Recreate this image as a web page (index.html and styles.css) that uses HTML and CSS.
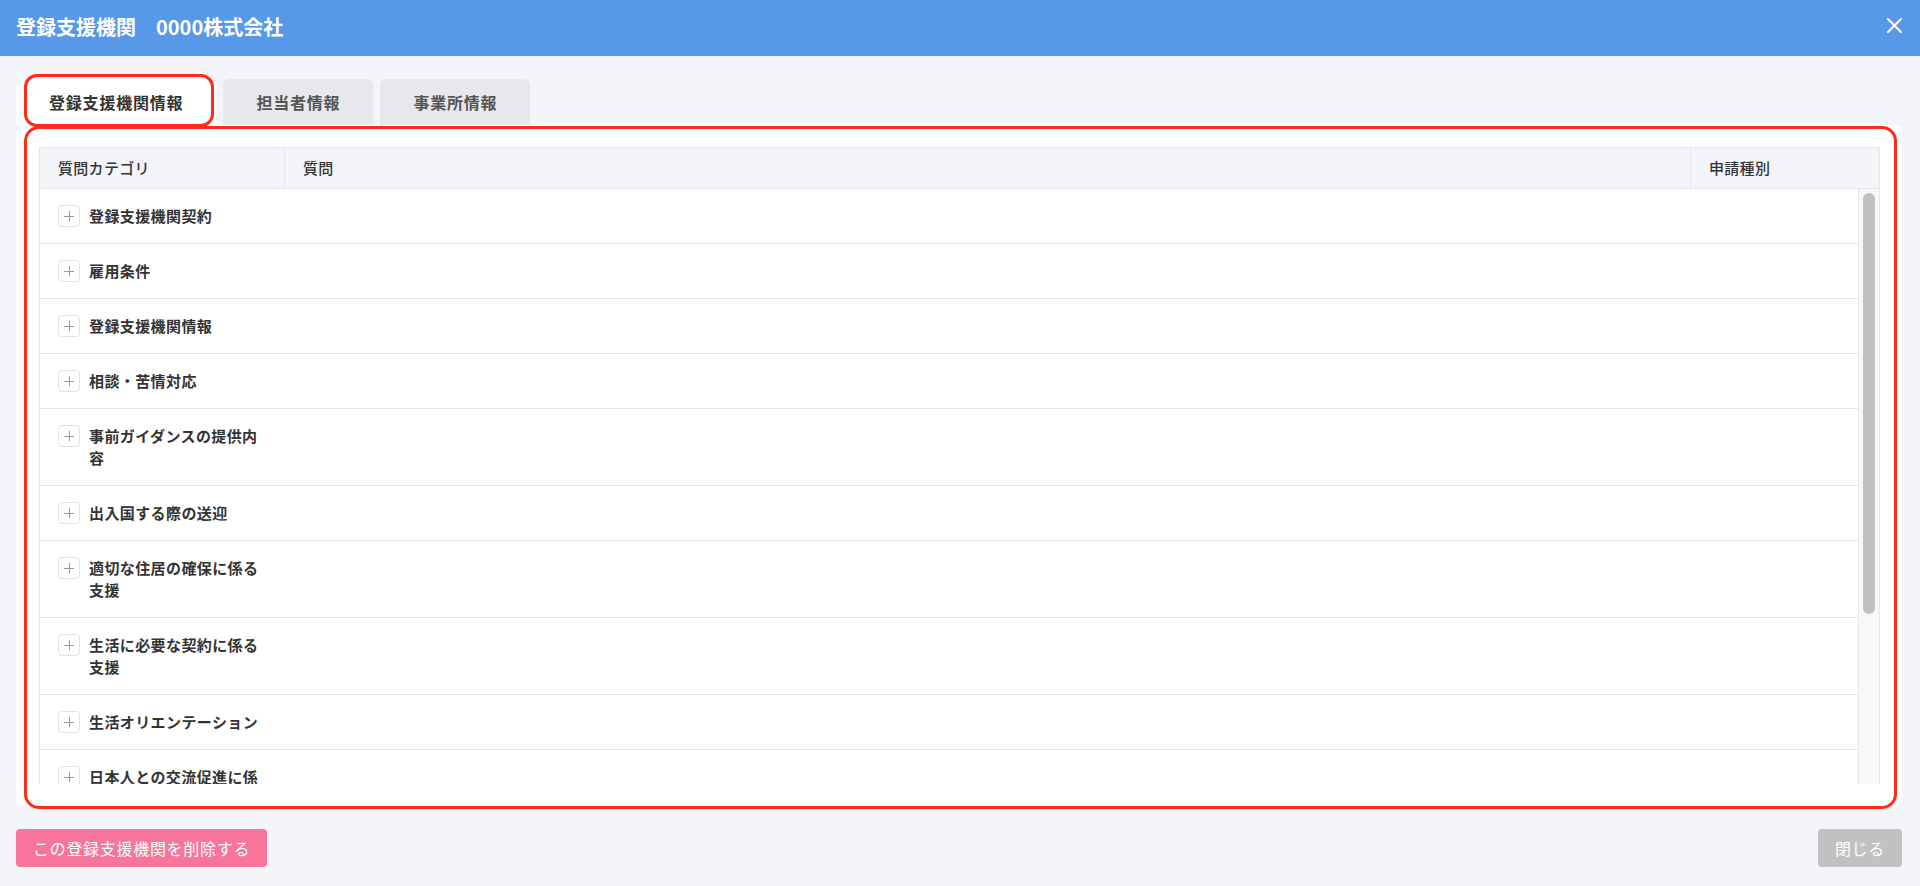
FILE: index.html
```html
<!DOCTYPE html>
<html lang="ja">
<head>
<meta charset="utf-8">
<title>登録支援機関</title>
<link rel="stylesheet" href="styles.css">
</head>
<body>
<div class="page">
  <header class="header">
    <div class="title">登録支援機関　0000株式会社</div>
    <button class="close-x" aria-label="close">
      <svg width="15" height="15" viewBox="0 0 15 15"><path d="M1 1L14 14M14 1L1 14" stroke="#fff" stroke-width="2" stroke-linecap="round"/></svg>
    </button>
  </header>

  <main class="main">
    <div class="tabs">
      <div class="tab active">登録支援機関情報</div>
      <div class="tab">担当者情報</div>
      <div class="tab">事業所情報</div>
    </div>
    <section class="card">
      <div class="table">
        <div class="thead">
          <div class="th">質問カテゴリ</div>
          <div class="th sep">質問</div>
          <div class="th sep">申請種別</div>
        </div>
        <div class="tbody">
          <div class="rows">
            <div class="row"><div class="cat"><span class="plus"></span><span class="cat-text">登録支援機関契約</span></div><div></div><div></div></div>
            <div class="row"><div class="cat"><span class="plus"></span><span class="cat-text">雇用条件</span></div><div></div><div></div></div>
            <div class="row"><div class="cat"><span class="plus"></span><span class="cat-text">登録支援機関情報</span></div><div></div><div></div></div>
            <div class="row"><div class="cat"><span class="plus"></span><span class="cat-text">相談・苦情対応</span></div><div></div><div></div></div>
            <div class="row"><div class="cat"><span class="plus"></span><span class="cat-text">事前ガイダンスの提供内容</span></div><div></div><div></div></div>
            <div class="row"><div class="cat"><span class="plus"></span><span class="cat-text">出入国する際の送迎</span></div><div></div><div></div></div>
            <div class="row"><div class="cat"><span class="plus"></span><span class="cat-text">適切な住居の確保に係る支援</span></div><div></div><div></div></div>
            <div class="row"><div class="cat"><span class="plus"></span><span class="cat-text">生活に必要な契約に係る支援</span></div><div></div><div></div></div>
            <div class="row"><div class="cat"><span class="plus"></span><span class="cat-text">生活オリエンテーション</span></div><div></div><div></div></div>
            <div class="row"><div class="cat"><span class="plus"></span><span class="cat-text">日本人との交流促進に係る支援</span></div><div></div><div></div></div>
          </div>
          <div class="vscroll"><div class="thumb"></div></div>
        </div>
      </div>
    </section>
  </main>

  <footer class="footer">
    <button class="btn btn-delete">この登録支援機関を削除する</button>
    <button class="btn btn-close">閉じる</button>
  </footer>

  <div class="anno anno-tab"></div>
  <div class="anno anno-card"></div>
</div>
</body>
</html>
```

FILE: styles.css
```css
* { box-sizing: border-box; }

html, body {
  margin: 0;
  padding: 0;
}

body {
  font-family: "Noto Sans CJK JP", "Noto Sans", sans-serif;
  background: #f4f5f9;
  color: #333;
  width: 1920px;
  height: 886px;
  overflow: hidden;
}

.page {
  position: relative;
  height: 886px;
}

.header {
  height: 56px;
  background: #5898e8;
  display: flex;
  align-items: center;
  justify-content: space-between;
  padding: 0 18px 0 16px;
}

.title {
  color: #fff;
  font-size: 20px;
  font-weight: 700;
  line-height: 1;
  padding-bottom: 2px;
}

.close-x {
  background: none;
  border: none;
  padding: 0;
  width: 15px;
  height: 15px;
  display: flex;
  margin-top: -6px;
}

.main {
  padding: 23px 18px 0 16px;
}

.tabs {
  display: flex;
  gap: 7px;
  height: 46px;
}

.tab {
  height: 46px;
  line-height: 46px;
  padding: 0 33px;
  font-size: 16px;
  letter-spacing: 0.8px;
  font-weight: 700;
  color: #555;
  background: #e7e8ec;
  border-radius: 6px 6px 0 0;
}

.tab.active {
  background: #fff;
  color: #333;
}

.card {
  background: #fff;
  border-radius: 0 6px 6px 6px;
  padding: 22px 22px 22px 23px;
}

.table {
  border: 1px solid #e6e6eb;
  border-bottom: none;
}

.thead {
  display: grid;
  grid-template-columns: 244px 1fr 189px;
  height: 41px;
  background: #f4f5f9;
  border-bottom: 1px solid #e6e6eb;
}

.th {
  font-size: 15px;
  line-height: 40px;
  padding-left: 18px;
  color: #333;
  font-weight: 500;
  letter-spacing: 0.3px;
}

.th.sep {
  border-left: 1px solid #e6e6eb;
}

.tbody {
  height: 595px;
  display: flex;
}

.rows {
  flex: 1;
  overflow: hidden;
}

.vscroll {
  flex: none;
  width: 21px;
  background: #f8f8fa;
  border-left: 1px solid #e6e6eb;
  padding: 4px 4px 0 4px;
}

.thumb {
  height: 421px;
  background: #c1c1c1;
  border-radius: 6px;
}

.row {
  display: grid;
  grid-template-columns: 244px 1fr 168px;
  border-bottom: 1px solid #e8e8ec;
}

.cat {
  display: flex;
  align-items: flex-start;
  gap: 9px;
  padding: 16px 16px 16px 18px;
}

.plus {
  flex: none;
  position: relative;
  width: 22px;
  height: 22px;
  border: 1px solid #e3e1e5;
  border-radius: 4px;
  background: #fff;
}

.plus::before,
.plus::after {
  content: "";
  position: absolute;
  background: #9a9a9e;
}

.plus::before {
  left: 5px;
  right: 5px;
  top: 10px;
  height: 1px;
}

.plus::after {
  top: 5px;
  bottom: 5px;
  left: 10px;
  width: 1px;
}

.cat-text {
  font-size: 15px;
  line-height: 22px;
  font-weight: 700;
  letter-spacing: 0.4px;
  color: #333;
}

.footer {
  display: flex;
  justify-content: space-between;
  padding: 23px 18px 0 16px;
}

.btn {
  height: 38px;
  padding: 0 17px;
  border: none;
  border-radius: 4px;
  font-family: "Noto Sans CJK JP", "Noto Sans", sans-serif;
  font-size: 16px;
  letter-spacing: 0.7px;
  color: #fff;
}

.btn-delete {
  background: #f7749a;
}

.btn-close {
  background: #c1c1c1;
}

.anno {
  position: absolute;
  border: 3px solid #ff2a1a;
  pointer-events: none;
}

.anno-tab {
  left: 24px;
  top: 74px;
  width: 190px;
  height: 53px;
  border-radius: 13px;
}

.anno-card {
  left: 24px;
  top: 126px;
  width: 1873px;
  height: 683px;
  border-radius: 15px;
}
```
